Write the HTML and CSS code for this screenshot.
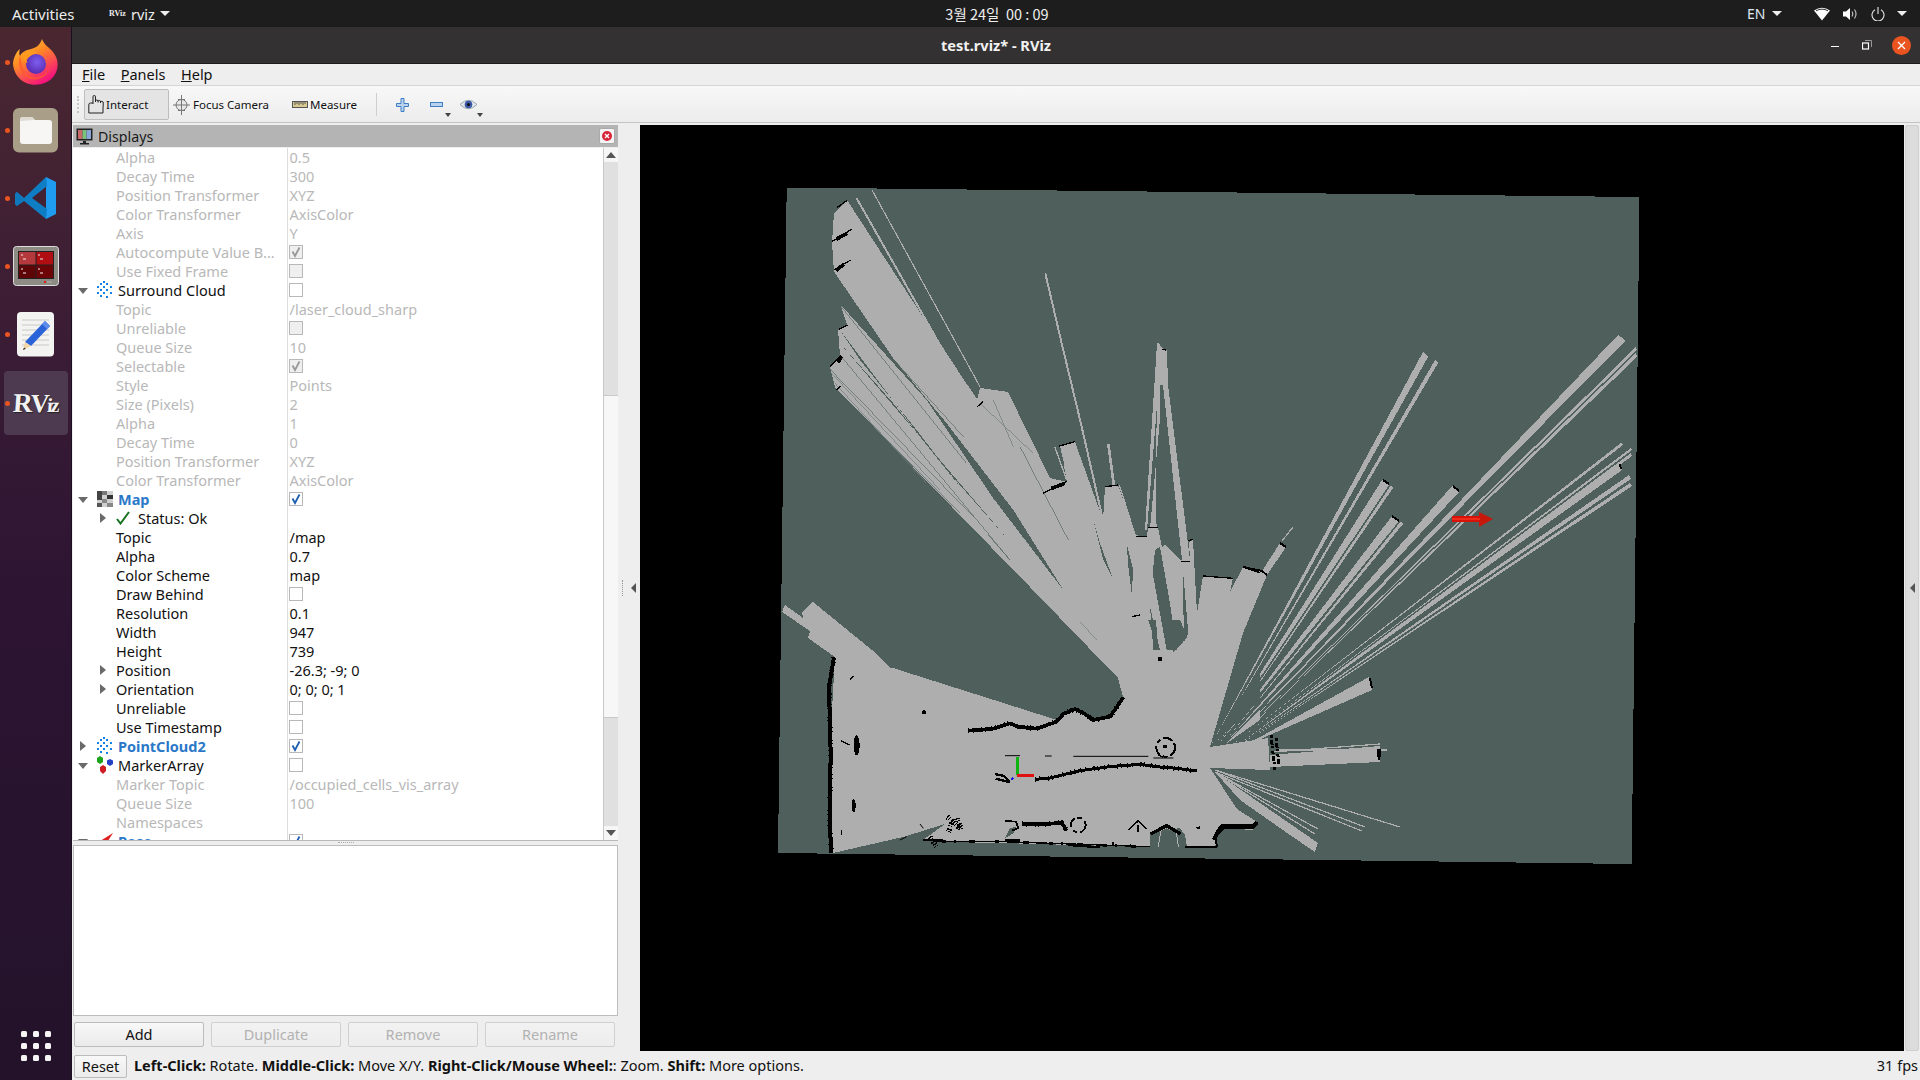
FILE: index.html
```html
<!DOCTYPE html>
<html lang="en">
<head>
<meta charset="utf-8">
<title>test.rviz* - RViz</title>
<link rel="stylesheet" href="styles.css">
</head>
<body>
<svg class="defs" width="0" height="0">
  <defs>
    <symbol id="i-cloud" viewBox="0 0 16 18">
      <g fill="#1183e6"><rect x="6" y="0" width="2" height="2"/><rect x="3" y="2" width="2" height="2"/><rect x="9" y="2" width="2" height="2"/><rect x="0" y="5" width="2" height="2"/><rect x="6" y="5" width="2" height="2"/><rect x="13" y="5" width="2" height="2"/><rect x="3" y="8" width="2" height="2"/><rect x="9" y="8" width="2" height="2"/><rect x="0" y="11" width="2" height="2"/><rect x="13" y="11" width="2" height="2"/><rect x="6" y="11" width="2" height="2"/><rect x="3" y="14" width="2" height="2"/><rect x="9" y="15" width="2" height="2"/></g>
    </symbol>
    <symbol id="i-down" viewBox="0 0 10 6"><path d="M0 0H10L5 6Z" fill="#6a6a6a"/></symbol>
    <symbol id="i-right" viewBox="0 0 6 10"><path d="M0 0V10L6 5Z" fill="#6a6a6a"/></symbol>
    <symbol id="i-check" viewBox="0 0 14 14"><path d="M3.5 6.5 6 11 10.5 2.5" fill="none" stroke="currentColor" stroke-width="1.8"/></symbol>
  </defs>
</svg>
<div class="screen">
  <header class="topbar">
    <div class="top-left">
      <span class="activities">Activities</span>
      <span class="app-mini">RViz</span>
      <span class="app-name">rviz</span>
      <span class="tri"></span>
    </div>
    <div class="clock">3월 24일&nbsp; 00 : 09</div>
    <div class="top-right">
      <span class="lang">EN</span><span class="tri tri-lang"></span>
      <svg class="sys sys-wifi" width="16" height="14" viewBox="0 0 16 14"><path d="M0 3.5Q8-2 16 3.500L8 13.500Z" fill="#fff"/><path d="M2 3.800Q8 0.500 14 3.800" fill="none" stroke="#1d1d1d" stroke-width=".9"/></svg>
      <svg class="sys sys-vol" width="15" height="14" viewBox="0 0 15 14"><path d="M0 4.500H3L7 1V13L3 9.500H0Z" fill="#fff"/><path d="M9 4.500Q10.500 7 9 9.500M11.500 2.500Q14.500 7 11.500 11.500" fill="none" stroke="#bbb" stroke-width="1.200"/></svg>
      <svg class="sys sys-pow" width="14" height="14" viewBox="0 0 14 14"><path d="M4 2.800A6 6 0 1 0 10 2.800M7 0V7" fill="none" stroke="#e8e8e8" stroke-width="1.100"/></svg>
      <span class="tri tri-pow"></span>
    </div>
  </header>

  <div class="below">
    <nav class="dock">
      <div class="dock-item">
        <span class="pip"></span>
        <svg class="d-firefox" width="46" height="46" viewBox="0 0 46 46">
          <defs>
            <linearGradient id="ffa" x1="0" y1="0" x2=".6" y2="1"><stop offset="0" stop-color="#ffd43a"/><stop offset=".45" stop-color="#ff8a24"/><stop offset="1" stop-color="#f5137d"/></linearGradient>
            <radialGradient id="ffb" cx=".55" cy=".4" r=".6"><stop offset="0" stop-color="#7d5ef0"/><stop offset="1" stop-color="#5a2bb0"/></radialGradient>
          </defs>
          <path d="M29 0C31 6 36 8 40 13 46 20 46 30 41 37 35 45 23 48 13 44 4 40 0 31 0 24 1 18 3 13 7 10 6 13 6 15 7 17 9 13 13 11 18 10 23 9 27 6 29 0Z" fill="url(#ffa)"/>
          <circle cx="23" cy="25" r="10" fill="url(#ffb)"/>
          <path d="M10 14C14 11 19 11 24 14 20 14 18 17 16 18 13 19 12 21 15 24 11 23 8 18 10 14Z" fill="#ff9a1f"/>
          <path d="M7 17C9 24 9 32 15 36 23 41 34 37 36 28 36 36 27 42 18 40 9 38 4 26 7 17Z" fill="#ff5a2e" opacity=".75"/>
        </svg>
      </div>
      <div class="dock-item">
        <span class="pip"></span>
        <svg width="46" height="45" viewBox="0 0 46 45">
          <rect width="45" height="44.500" rx="6" fill="#a99e88"/>
          <path d="M7 12Q7 9 10 9H19L22 12H36Q39 12 39 15V33Q39 36 36 36H10Q7 36 7 33Z" fill="#f8f6f4"/>
          <path d="M7 13V12Q7 9 10 9H19L22 12Z" fill="#dfdbd3"/>
        </svg>
      </div>
      <div class="dock-item">
        <span class="pip"></span>
        <svg width="44" height="43" viewBox="0 0 44 43">
          <path d="M32 0 42 5V37L32 42Z" fill="#1f9cf0"/>
          <path d="M32 0 10 21 3 15 1 17 8 22 1 27 3 29 10 24 32 42 33 32 18 21 33 9Z" fill="#0f7dc4"/>
          <path d="M3 15 1 17V27L3 29 8 22Z" fill="#0f78bb"/>
        </svg>
      </div>
      <div class="dock-item">
        <span class="pip"></span>
        <svg width="46" height="40" viewBox="0 0 46 40">
          <rect x=".5" y=".5" width="45" height="39" rx="3" fill="#8e8a84" stroke="#ddd"/>
          <rect x="5" y="5" width="36" height="28" fill="#222"/>
          <rect x="6" y="6" width="16.500" height="12.500" fill="#b5383c"/>
          <rect x="23.500" y="6" width="16.500" height="12.500" fill="#b00e12"/>
          <rect x="6" y="19.500" width="16.500" height="12.500" fill="#5e0508"/>
          <rect x="23.500" y="19.500" width="16.500" height="12.500" fill="#6d0508"/>
          <path d="M8 9h2M8 23h2M25 9h2M25 23h2M10 13h3M10 27h3M27 13h3M27 27h3" stroke="#eee"/>
          <rect x="31" y="35" width="2" height="2" fill="#e11"/>
          <rect x="34" y="35" width="5" height="2" fill="#a09c96"/>
        </svg>
      </div>
      <div class="dock-item">
        <span class="pip"></span>
        <svg width="38" height="45" viewBox="0 0 38 45">
          <rect width="37" height="44.500" rx="4" fill="#f3f3f1"/>
          <path d="M5 8H32M5 13H32M5 18H32M5 23H32M5 28H32M5 33H32" stroke="#c9c9c9"/>
          <path d="M28 9 33 14 14 34 8 30Z" fill="#2a62d8"/>
          <path d="M28 9 33 14 30 17 25 12Z" fill="#5d8cec"/>
          <path d="M8 30 14 34 6 38Z" fill="#f1d6a8"/>
          <path d="M6.500 36.500 8 35.500 8.500 37 6 38Z" fill="#333"/>
        </svg>
      </div>
      <div class="dock-item dock-active">
        <span class="pip pip-active"></span>
        <span class="rviz-logo">R<span class="rviz-v">V</span><span class="rviz-iz">iz</span></span>
      </div>
      <svg class="apps" width="30" height="30" viewBox="0 0 30 30">
        <g fill="#f5f5f5"><rect width="6" height="6" rx="1.500"/><rect x="12" width="6" height="6" rx="1.500"/><rect x="24" width="6" height="6" rx="1.500"/><rect y="12" width="6" height="6" rx="1.500"/><rect x="12" y="12" width="6" height="6" rx="1.500"/><rect x="24" y="12" width="6" height="6" rx="1.500"/><rect y="24" width="6" height="6" rx="1.500"/><rect x="12" y="24" width="6" height="6" rx="1.500"/><rect x="24" y="24" width="6" height="6" rx="1.500"/></g>
      </svg>
    </nav>

    <main class="window">
      <div class="titlebar">
        <span></span>
        <span class="title">test.rviz* - RViz</span>
        <div class="win-controls">
          <span class="w-min"></span>
          <svg class="w-max" width="10" height="10" viewBox="0 0 10 10"><rect x=".5" y="3" width="6" height="6" fill="none" stroke="#fff" stroke-width="1.200"/><path d="M3 .5H9.500V7" fill="none" stroke="#999"/></svg>
          <svg class="w-close" width="19" height="19" viewBox="0 0 19 19"><circle cx="9.500" cy="9.500" r="9.500" fill="#e95420"/><path d="M6 6 13 13M13 6 6 13" stroke="#fff" stroke-width="1.300"/></svg>
        </div>
      </div>
      <div class="menubar">
        <span class="menu"><u>F</u>ile</span>
        <span class="menu"><u>P</u>anels</span>
        <span class="menu"><u>H</u>elp</span>
      </div>
      <div class="toolbar">
        <span class="grip"></span>
        <div class="tool tool-on">
          <svg width="17" height="19" viewBox="0 0 17 19"><path d="M5 9V1.800Q5 .5 6.200 .5 7.500 .5 7.500 1.800V7M7.500 7V5.500Q8.700 4.500 10 5.500V7.500M10 6Q11.200 5 12.500 6V8M12.500 6.500Q14 6 15.200 7V12M5 8H2.500Q.8 8 .8 10V18H15V12" fill="none" stroke="#222" stroke-width="1"/></svg>
          <span>Interact</span>
        </div>
        <div class="tool tool-focus">
          <svg width="17" height="20" viewBox="0 0 17 20"><circle cx="8.500" cy="10" r="5.500" fill="#e8e8e8" stroke="#777"/><path d="M8.500 0V20M0 10H17M5 4.500 12 4.500M5 15.500H12" stroke="#777" fill="none"/></svg>
          <span>Focus Camera</span>
        </div>
        <div class="tool tool-measure">
          <svg width="16" height="8" viewBox="0 0 16 8"><rect x=".5" y=".5" width="15" height="6" fill="#d7c98f" stroke="#555"/><path d="M3 1V4M5 1V3M7 1V4M9 1V3M11 1V4M13 1V3" stroke="#555"/></svg>
          <span>Measure</span>
        </div>
        <span class="tb-sep"></span>
        <svg class="tb-plus" width="13" height="14" viewBox="0 0 13 14"><path d="M5 .5H8V5.500H12.500V8.500H8V13.500H5V8.500H.5V5.500H5Z" fill="#b9d2ee" stroke="#3e7fc4"/></svg>
        <svg class="tb-minus" width="13" height="6" viewBox="0 0 13 6"><rect x=".5" y=".5" width="12" height="4" fill="#b9d2ee" stroke="#3e7fc4"/></svg>
        <svg class="tb-drop" width="6" height="4" viewBox="0 0 6 4"><path d="M0 0H6L3 4Z" fill="#444"/></svg>
        <svg class="tb-eye" width="17" height="13" viewBox="0 0 17 13"><path d="M0 6.500Q8.500-2 17 6.500 8.500 15 0 6.500Z" fill="#e4e6ee" stroke="#9aa"/><circle cx="8.500" cy="6.500" r="3.800" fill="#3c59a8"/><circle cx="8.500" cy="6.500" r="1.600" fill="#111"/></svg>
        <svg class="tb-drop" width="6" height="4" viewBox="0 0 6 4"><path d="M0 0H6L3 4Z" fill="#444"/></svg>
      </div>

      <div class="workspace">
        <section class="left-panel">
          <div class="panel-title">
            <svg width="17" height="17" viewBox="0 0 17 17"><rect x=".5" y=".5" width="16" height="12" fill="#222"/><rect x="2" y="2" width="4.500" height="9" fill="#c96a6a"/><rect x="6.500" y="2" width="4" height="9" fill="#7bc27a"/><rect x="10.500" y="2" width="4.500" height="9" fill="#8aa6d8"/><rect x="7" y="13" width="3" height="2" fill="#222"/><rect x="4" y="15" width="9" height="1.500" fill="#222"/></svg>
            <span class="panel-name">Displays</span>
            <span class="panel-close"><svg width="10" height="10" viewBox="0 0 10 10"><circle cx="5" cy="5" r="5" fill="#d8243a"/><path d="M3 3 7 7M7 3 3 7" stroke="#fff" stroke-width="1.300"/></svg></span>
          </div>
          <div class="tree-frame">
            <div class="tree">
              <div class="row off"><span class="cell-l">Alpha</span><span class="cell-v">0.5</span></div>
              <div class="row off"><span class="cell-l">Decay Time</span><span class="cell-v">300</span></div>
              <div class="row off"><span class="cell-l">Position Transformer</span><span class="cell-v">XYZ</span></div>
              <div class="row off"><span class="cell-l">Color Transformer</span><span class="cell-v">AxisColor</span></div>
              <div class="row off"><span class="cell-l">Axis</span><span class="cell-v">Y</span></div>
              <div class="row off"><span class="cell-l">Autocompute Value B...</span><span class="cell-v"><span class="box box-off"><svg width="14" height="14"><use href="#i-check"/></svg></span></span></div>
              <div class="row off"><span class="cell-l">Use Fixed Frame</span><span class="cell-v"><span class="box box-off"></span></span></div>
              <div class="row"><span class="cell-l top"><svg class="arr-d" width="10" height="6"><use href="#i-down"/></svg><svg class="ico" width="16" height="18"><use href="#i-cloud"/></svg>Surround Cloud</span><span class="cell-v"><span class="box"></span></span></div>
              <div class="row off"><span class="cell-l">Topic</span><span class="cell-v">/laser_cloud_sharp</span></div>
              <div class="row off"><span class="cell-l">Unreliable</span><span class="cell-v"><span class="box box-off"></span></span></div>
              <div class="row off"><span class="cell-l">Queue Size</span><span class="cell-v">10</span></div>
              <div class="row off"><span class="cell-l">Selectable</span><span class="cell-v"><span class="box box-off"><svg width="14" height="14"><use href="#i-check"/></svg></span></span></div>
              <div class="row off"><span class="cell-l">Style</span><span class="cell-v">Points</span></div>
              <div class="row off"><span class="cell-l">Size (Pixels)</span><span class="cell-v">2</span></div>
              <div class="row off"><span class="cell-l">Alpha</span><span class="cell-v">1</span></div>
              <div class="row off"><span class="cell-l">Decay Time</span><span class="cell-v">0</span></div>
              <div class="row off"><span class="cell-l">Position Transformer</span><span class="cell-v">XYZ</span></div>
              <div class="row off"><span class="cell-l">Color Transformer</span><span class="cell-v">AxisColor</span></div>
              <div class="row"><span class="cell-l top blue"><svg class="arr-d" width="10" height="6"><use href="#i-down"/></svg><svg class="ico" width="16" height="18" viewBox="0 0 16 18"><rect y="1" width="16" height="16" fill="#cfcfcf"/><rect width="5" height="9" y="1" fill="#444"/><rect x="5" y="1" width="5" height="4" fill="#777"/><rect x="10" y="5" width="6" height="4" fill="#333"/><rect y="13" width="5" height="4" fill="#555"/><rect x="5" y="9" width="5" height="4" fill="#888"/><rect x="10" y="13" width="6" height="4" fill="#888"/></svg>Map</span><span class="cell-v"><span class="box box-blue"><svg width="14" height="14"><use href="#i-check"/></svg></span></span></div>
              <div class="row"><span class="cell-l status"><svg class="arr-r" width="6" height="10"><use href="#i-right"/></svg><svg class="ok" width="14" height="14" viewBox="0 0 14 14"><path d="M1 8 4.500 12.500 13 1" fill="none" stroke="#17711f" stroke-width="2"/></svg>Status: Ok</span><span class="cell-v"></span></div>
              <div class="row"><span class="cell-l">Topic</span><span class="cell-v">/map</span></div>
              <div class="row"><span class="cell-l">Alpha</span><span class="cell-v">0.7</span></div>
              <div class="row"><span class="cell-l">Color Scheme</span><span class="cell-v">map</span></div>
              <div class="row"><span class="cell-l">Draw Behind</span><span class="cell-v"><span class="box"></span></span></div>
              <div class="row"><span class="cell-l">Resolution</span><span class="cell-v">0.1</span></div>
              <div class="row"><span class="cell-l">Width</span><span class="cell-v">947</span></div>
              <div class="row"><span class="cell-l">Height</span><span class="cell-v">739</span></div>
              <div class="row"><span class="cell-l sub"><svg class="arr-r" width="6" height="10"><use href="#i-right"/></svg>Position</span><span class="cell-v">-26.3; -9; 0</span></div>
              <div class="row"><span class="cell-l sub"><svg class="arr-r" width="6" height="10"><use href="#i-right"/></svg>Orientation</span><span class="cell-v">0; 0; 0; 1</span></div>
              <div class="row"><span class="cell-l">Unreliable</span><span class="cell-v"><span class="box"></span></span></div>
              <div class="row"><span class="cell-l">Use Timestamp</span><span class="cell-v"><span class="box"></span></span></div>
              <div class="row"><span class="cell-l top blue"><svg class="arr-rt" width="6" height="10"><use href="#i-right"/></svg><svg class="ico" width="16" height="18"><use href="#i-cloud"/></svg>PointCloud2</span><span class="cell-v"><span class="box box-blue"><svg width="14" height="14"><use href="#i-check"/></svg></span></span></div>
              <div class="row"><span class="cell-l top"><svg class="arr-d" width="10" height="6"><use href="#i-down"/></svg><svg class="ico" width="16" height="18" viewBox="0 0 16 18"><path d="M3 0 6 2V6L3 8 0 6V2Z" fill="#1ca51c"/><path d="M13 3 16 4.500V8L13 10 10 8V4.500Z" fill="#2440c8"/><path d="M6 9 9 11V15L6 18 3 15V11Z" fill="#d01c24"/></svg>MarkerArray</span><span class="cell-v"><span class="box"></span></span></div>
              <div class="row off"><span class="cell-l">Marker Topic</span><span class="cell-v">/occupied_cells_vis_array</span></div>
              <div class="row off"><span class="cell-l">Queue Size</span><span class="cell-v">100</span></div>
              <div class="row off"><span class="cell-l">Namespaces</span><span class="cell-v"></span></div>
              <div class="row"><span class="cell-l top blue"><svg class="arr-d" width="10" height="6"><use href="#i-down"/></svg><svg class="ico" width="16" height="18" viewBox="0 0 16 18"><path d="M0 11 16 1 9 12Z" fill="#e02020"/></svg>Pose</span><span class="cell-v"><span class="box box-blue"><svg width="14" height="14"><use href="#i-check"/></svg></span></span></div>
            </div>
            <div class="scrollbar">
              <span class="sb-btn"><svg width="10" height="6" viewBox="0 0 10 6"><path d="M0 6H10L5 0Z" fill="#555"/></svg></span>
              <span class="sb-track sb-upper"></span>
              <span class="sb-thumb"></span>
              <span class="sb-track sb-lower"></span>
              <span class="sb-btn"><svg width="10" height="6" viewBox="0 0 10 6"><path d="M0 0H10L5 6Z" fill="#555"/></svg></span>
            </div>
          </div>
          <div class="hsplit"><span class="hdots"></span></div>
          <div class="desc"></div>
          <div class="btn-row">
            <span class="btn">Add</span>
            <span class="btn btn-off">Duplicate</span>
            <span class="btn btn-off">Remove</span>
            <span class="btn btn-off">Rename</span>
          </div>
        </section>
        <div class="vsplit">
          <span class="vdots"></span>
          <svg width="5" height="10" viewBox="0 0 5 10"><path d="M5 0V10L0 5Z" fill="#555"/></svg>
        </div>
        <div class="view">
          <svg class="map" width="1264" height="926" viewBox="640 125 1264 926" shape-rendering="crispEdges">
            <polygon class="unk" points="786.700,187.500 1639.500,197 1631.700,864 778,853"/>
            <polygon class="free" points="835,387 830,367 840,355 838,330 847,325 840,303 834,272 832,242 834,213 847,200 977,400 980,388 1008,392 1050,478 1067,482 1060,445 1075,442 1103,520 1105,487 1118,485 1135,535 1147,537 1148,527 1158,527 1162,547 1165,545 1181,560 1190,560 1189,542 1193,540 1197,613 1203,576 1233,578 1230,592 1243,567 1262,571 1267,575 1243,633 1210,747 1210,768 1237,809 1257,822 1253,830 1220,828 1215,847 1187,847 1185,835 1180,828 1150,833 1150,847 1000,843 940,842 923,840 945,824 903,837 833,853 828,780 835,657 808,638 810,631 782,612 785,605 803,618 802,612 813,602 872,650 890,668 893,668 1057,720 1077,708 1093,720 1113,713 1123,697 1118,678 1030,587"/>
            <polygon class="free" points="1157,528 1156,520 1157,343 1165,350 1167,350 1168,385 1190,560 1182,560 1162,397 1150,528"/>
            <polygon class="unk" points="1160,385 1163,385 1182,560 1168,545 1161,500"/>
            <polygon class="free" points="1157,343 1160,344 1159,380 1147,530 1145,530 1155,375"/>
            <g transform="translate(760,170) scale(.33333)">
              <polygon class="unk" points="222,305 238,400 500,690 700,985 910,1260 760,1020 560,760 400,565"/>
              <polygon class="unk" points="236,515 300,590 480,800 745,1110 560,900 400,700"/>
              <polygon class="unk" points="240,480 480,800 600,950 470,780 300,570"/>
              <polygon class="unk" points="900,830 912,880 916,930 898,880"/>
              <polygon class="unk" points="1000,1050 1020,1120 1060,1230 1030,1170"/>
              <polygon class="unk" points="1100,1120 1120,1200 1115,1270 1105,1190"/>
              <polygon class="unk" points="1185,1140 1200,1130 1230,1300 1250,1440 1220,1440 1178,1210"/>
              <polygon class="unk" points="1170,1310 1200,1440 1180,1440"/>
              <polygon class="unk" points="1268,1190 1285,1390 1272,1415"/>
              <path class="fine" d="M225,655 600,1030M212,600 640,1040M240,555 750,1170M685,1095 750,1170M780,830 925,1110M240,405 620,880M285,440 610,800"/>
              <path class="fine-t" d="M225,640 500,940M215,610 540,960M660,700 820,850M700,690 760,830M960,1355 1010,1410"/>
              <path class="thin" stroke-width="3.500" d="M336,60 660,650"/>
              <path class="thin" stroke-width="6" d="M290,85 560,560 650,690"/>
              <path class="thin" stroke-width="6" d="M856,310 905,520 965,770 1030,1055"/>
              <path class="thin" stroke-width="8" d="M1045,822 1062,948"/>
              <path class="thin" stroke-width="4" d="M885,832 920,930"/>
              <path class="thin" stroke-width="4" d="M1078,945 1125,1095"/>
              <path class="wall" stroke-width="4" d="M232,112 260,92M215,215 275,178M222,300 272,270M238,478 262,465M210,590 243,555M228,660 243,648M650,712 668,695M850,970 920,935M898,828 945,815M1035,950 1075,945M1128,1100 1160,1100M1165,1072 1195,1072M1205,538 1218,540M1262,1174 1290,1174M1330,1218 1420,1225M1450,1192 1500,1208M1115,1340 1140,1335M1285,1112 1298,1108"/>
              <path class="wall" stroke-width="11" d="M228,302 252,282M228,208 262,190M875,955 915,940M235,578 244,558"/>
            </g>
            <g class="free">
              <polygon points="1210,747 1423,352 1428,357"/>
              <polygon points="1212,747 1435,360 1438,363"/>
              <polygon points="1215,745 1382,480 1389,485"/>
              <polygon points="1217,745 1391,485 1393,488"/>
              <polygon points="1218,745 1392,516 1399,521"/>
              <polygon points="1222,745 1401,521 1403,524"/>
              <polygon points="1224,745 1452,486 1459,492"/>
              <polygon points="1228,745 1618,335 1624,339"/>
              <polygon points="1226,745 1623,339 1625,341"/>
              <polygon points="1230,745 1636,347 1637,350"/>
              <polygon points="1232,745 1636,353 1637,357"/>
              <polygon points="1232,745 1621,443 1623,445"/>
              <polygon points="1236,745 1631,448 1632,450"/>
              <polygon points="1238,745 1631,453 1632,456"/>
              <polygon points="1238,745 1620,463 1622,470"/>
              <polygon points="1240,745 1629,475 1631,479"/>
              <polygon points="1242,745 1630,483 1632,486"/>
              <polygon points="1240,748 1369,677 1372,690"/>
              <polygon points="1280,543 1286,547 1267,575 1262,571"/>
              <polygon points="1210,747 1268,738 1270,770 1210,768"/>
              <polygon points="1270,755 1380,746 1380,762 1270,767"/>
              <polygon points="1215,772 1318,843 1315,852 1290,835 1240,800"/>
            </g>
            <path class="thin-s" d="M1282,541 1293,527M1272,752 1380,744M1278,750 1387,750M1215,770 1400,827M1215,770 1365,827M1215,772 1362,831M1215,772 1318,829M1215,772 1315,834"/>
            <path class="wall" stroke-width="2" d="M1280,543 1286,547M1243,567 1262,571M1262,571 1267,575M1383,480 1389,484M1392,516 1399,521M1453,486 1459,491M1370,678 1372,688M1379,755 1379,760M1620,464 1621,469"/>
            <g transform="translate(760,620) scale(.33333)">
              <polygon class="unk" points="1185,680 1190,640 1220,625 1255,640 1272,680"/>
              <polygon class="unk" points="735,655 750,625 768,620 760,640"/>
              <polygon class="unk" points="1165,0 1195,95 1188,0"/>
              <polygon class="unk" points="1260,0 1282,50 1270,65 1240,98 1212,0"/>
              <polygon class="unk" points="1350,380 1500,140 1500,240"/>
              <polygon class="free" points="1400,370 1500,270 1500,300"/>
              <path class="thin" stroke-width="3" d="M1195,680 1203,628M1255,680 1248,630"/>
              <path class="wall" stroke-width="11" d="M625,332 700,326 750,310 775,320 830,326 890,305 910,282 945,267 975,282 1000,300 1050,290 1070,262 1090,232"/>
              <path class="rough" d="M625,332 700,326 750,310 775,320 830,326 890,305 910,282 945,267 975,282 1000,300 1050,290 1070,262 1090,232"/>
              <path class="wall" stroke-width="12" d="M222,112 207,200 212,400 209,600 214,698"/>
              <path class="rough" d="M222,112 207,200 212,400 209,600 214,698"/>
              <path class="wall" stroke-width="3" d="M735,407H780M855,408H875M940,409H1165M1180,414H1240"/>
              <path class="wall" stroke-width="9" d="M825,478 870,474 960,452 1050,440 1140,433 1200,441 1250,445 1310,453"/>
              <path class="rough" d="M825,478 870,474 960,452 1050,440 1140,433 1200,441 1250,445 1310,453"/>
              <path class="wall" stroke-width="7" d="M705,462 732,468 748,486 707,476"/>
              <ellipse class="blob" cx="290" cy="376" rx="9" ry="30"/>
              <ellipse class="blob" cx="281" cy="557" rx="6" ry="20"/>
              <circle class="blob" cx="492" cy="277" r="6"/>
              <circle class="blob" cx="1215" cy="380" r="6"/>
              <circle class="ring" cx="1217" cy="382" r="28"/>
              <circle class="blob" cx="1200" cy="118" r="7"/>
              <path class="wall" stroke-width="4" d="M243,362 270,375M1195,405 1210,412M245,630V645M270,178 280,168"/>
              <path class="wall" stroke-width="5" d="M735,602 768,605 775,625 755,632"/>
              <path class="wall" stroke-width="11" d="M785,612 850,613 905,608 920,632"/>
              <path class="rough" d="M785,612 850,613 905,608 920,632"/>
              <circle class="ring" cx="955" cy="615" r="22"/>
              <path class="wall" stroke-width="5" d="M1105,630 1135,602 1160,628M1135,615V635"/>
              <path class="wall" stroke-width="10" d="M1172,642 1220,617 1262,642"/>
              <path class="wall" stroke-width="6" d="M1275,680 1370,680 1368,650 1392,625 1478,625 1490,612"/>
              <path class="wall" stroke-width="4" d="M545,665 725,665 1170,680"/>
              <path class="rough-s" d="M545,665 725,665 1170,680"/>
              <path class="wall" stroke-width="7" d="M925,675 1020,682M1060,665 1060,675M735,662H780M490,660 550,662M1310,625 1320,622"/>
              <path class="rough-b" d="M562,590 600,625M575,610 565,635M590,595 605,630M510,650 530,680"/>
              <path class="wall" stroke-width="3" d="M480,612 490,625M420,660 440,650"/>
              <rect x="768" y="410" width="8" height="56" fill="#0fb30f"/>
              <rect x="772" y="463" width="51" height="9" fill="#e01010"/>
              <circle cx="757" cy="476" r="4" fill="#1a1ae0"/>
            </g>
            <path class="rough-c" d="M1271,735 1275,770M1276,738 1279,765"/>
            <rect class="blob" x="1377" y="749" width="4" height="8"/>
            <path class="wall" stroke-width="4" d="M1217,833 1222,826H1254L1257,822M1217,833 1214,840"/>
            <g shape-rendering="auto">
              <rect x="1452" y="516" width="29" height="6" fill="#d81208"/>
              <path d="M1479 512 1493 519 1479 527Z" fill="#c8180c"/>
              <path d="M1452 519H1480" stroke="#ee2a18" stroke-width="2"/>
            </g>
          </svg>
        </div>
        <div class="right-dock"><svg width="5" height="10" viewBox="0 0 5 10"><path d="M5 0V10L0 5Z" fill="#555"/></svg></div>
      </div>
      <footer class="statusbar">
        <span class="btn btn-reset">Reset</span>
        <span class="hint"><b>Left-Click:</b> Rotate. <b>Middle-Click:</b> Move X/Y. <b>Right-Click/Mouse Wheel:</b>: Zoom. <b>Shift:</b> More options.</span>
        <span class="fps">31 fps</span>
      </footer>
    </main>
  </div>
</div>
</body>
</html>
```

FILE: styles.css
```css
* { box-sizing: border-box; }
html, body { margin: 0; height: 100%; }
body { font-family: "Noto Sans", Lato, sans-serif; font-size: 14.5px; color: #111; overflow: hidden; background: #000; }
.defs { position: absolute; }
.screen { width: 1920px; height: 1080px; display: flex; flex-direction: column; }

/* top bar */
.topbar { height: 27px; flex: none; background: #1d1d1d; color: #eee; display: grid; grid-template-columns: 900px 194px 1fr; align-items: center; font-size: 15px; }
.top-left { display: flex; align-items: center; padding-left: 12px; }
.activities { width: 97px; }
.app-mini { width: 22px; font: bold 8px "Liberation Serif", serif; }
.app-name { width: 29px; font-size: 14.5px; }
.tri { width: 0; height: 0; border-left: 5px solid transparent; border-right: 5px solid transparent; border-top: 5px solid #eee; }
.clock { text-align: center; font-family: "Noto Sans CJK KR", "Noto Sans", sans-serif; font-size: 14.5px; white-space: nowrap; }
.top-right { display: flex; align-items: center; padding-left: 653px; }
.lang { width: 25px; color: #dfe8f2; font-size: 14px; }
.tri-lang { margin-right: 32px; }
.sys { flex: none; }
.sys-wifi { margin-right: 13px; }
.sys-vol { margin-right: 13px; }
.sys-pow { margin-right: 12px; }

.below { flex: 1; display: flex; min-height: 0; }

/* dock */
.dock { width: 72px; flex: none; background: linear-gradient(180deg, #4a2730 0%, #3a1c35 30%, #2c1432 55%, #23122a 100%); display: flex; flex-direction: column; align-items: center; position: relative; padding-top: 1px; border-right: 1px solid #1a0f1f; }
.dock-item { width: 64px; height: 68px; flex: none; display: flex; align-items: center; justify-content: center; position: relative; }
.pip { position: absolute; left: 1px; top: 32px; width: 5px; height: 5px; border-radius: 50%; background: #e95420; }
.dock-active { background: #4e3a50; border-radius: 4px; height: 64px; margin-top: 3px; }
.pip-active { top: 30px; }
.rviz-logo { font: bold 27px "Liberation Serif", serif; color: #f2f2f2; letter-spacing: -2px; transform: skewX(-4deg); line-height: 1; text-shadow: 1px 1px 1px #222; }
.rviz-v { font-size: 26px; }
.rviz-iz { font-size: 20px; }
.apps { position: absolute; left: 21px; bottom: 19px; }

/* window */
.window { flex: 1; min-width: 0; display: flex; flex-direction: column; background: #eee; }
.titlebar { height: 37px; flex: none; background: #333132; color: #f2f2f2; display: grid; grid-template-columns: 1fr auto 1fr; align-items: center; border-bottom: 1px solid #1d1d1d; }
.title { font-weight: 700; font-size: 14.6px; }
.win-controls { display: flex; align-items: center; justify-content: flex-end; padding-right: 9px; }
.w-min { width: 8px; height: 1px; background: #fff; margin-right: 23px; margin-top: 3px; }
.w-max { margin-right: 20px; }
.menubar { height: 22px; flex: none; display: flex; align-items: center; padding-left: 10px; padding-bottom: 2px; gap: 15.5px; border-bottom: 1px solid #d4d4d4; background: #eee; }
.menu { color: #111; }
.toolbar { height: 37px; flex: none; display: flex; align-items: center; background: linear-gradient(180deg, #f8f8f8, #ececec); border-bottom: 1px solid #c4c4c4; padding-left: 5px; padding-top: 1px; font-size: 11.5px; position: relative; }
.grip { width: 1px; height: 17px; border-left: 2px dotted #c4c4c4; margin-right: 5px; }
.tool { display: flex; align-items: center; height: 31px; }
.tool-on { width: 85px; padding-left: 3px; gap: 1px; background: #e4e4e4; border: 1px solid #bdbdbd; border-radius: 2px; margin-right: 4px; }
.tool-focus { width: 119px; gap: 3px; }
.tool-measure { width: 84px; gap: 2px; }
.tb-sep { width: 1px; height: 23px; background: #cfcfcf; margin-right: 19px; }
.tb-plus { margin-right: 21px; }
.tb-minus { margin-right: 2px; }
.tb-drop { margin: 21px 0 0 0; }
.tb-minus + .tb-drop { margin-right: 9px; }

.workspace { flex: 1; display: flex; min-height: 0; padding-top: 2px; }
.left-panel { width: 545px; flex: none; display: flex; flex-direction: column; margin-left: 1px; }
.panel-title { height: 22px; flex: none; background: #b4b4b4; display: flex; align-items: center; padding-left: 3px; position: relative; }
.panel-name { margin-left: 5px; font-size: 14.2px; color: #1a1a1a; }
.panel-close { position: absolute; right: 3px; top: 3px; width: 16px; height: 16px; background: #f4f4f4; border: 1px solid #aaa; border-radius: 2px; display: flex; align-items: center; justify-content: center; }
.tree-frame { height: 693px; flex: none; display: flex; background: #fff; border-bottom: 1px solid #b9b9b9; margin-top: 1px; }
.tree { flex: 1; overflow: hidden; }
.row { height: 19px; display: grid; grid-template-columns: 213.5px 1fr; line-height: 19px; white-space: nowrap; }
.off { color: #b8b8b8; }
.cell-l { padding-left: 43px; display: flex; align-items: center; position: relative; }
.cell-v { padding-left: 2px; border-left: 1px solid #dcdcdc; display: flex; align-items: center; }
.top { padding-left: 45px; }
.blue { color: #2b78c8; font-weight: 700; }
.status { padding-left: 65px; }
.arr-d { position: absolute; left: 5px; top: 7px; }
.arr-rt { position: absolute; left: 7px; top: 4px; }
.arr-r { position: absolute; left: 27px; top: 4px; }
.ico { position: absolute; left: 24px; top: 0; }
.ok { position: absolute; left: 43px; top: 2px; }
.box { width: 14px; height: 14px; margin: -1px 0 0 -1px; border: 1px solid #b8b8b8; background: #fff; display: block; color: #1f5fb0; }
.box svg { display: block; margin: -1px; }
.box-off { background: #efefef; color: #999; }
.scrollbar { width: 15px; flex: none; display: flex; flex-direction: column; border-left: 1px solid #c9c9c9; }
.sb-btn { height: 14px; flex: none; display: flex; align-items: center; justify-content: center; background: #f6f6f6; }
.sb-track { background: #e0e0e0; display: block; }
.sb-upper { height: 233px; }
.sb-thumb { height: 323px; background: #f7f7f7; border-top: 1px solid #c9c9c9; border-bottom: 1px solid #c9c9c9; display: block; }
.sb-lower { flex: 1; }
.hsplit { height: 4px; flex: none; position: relative; }
.hdots { position: absolute; left: 265px; top: 1px; width: 16px; border-top: 1px dotted #aaa; }
.desc { height: 171px; flex: none; background: #fff; border: 1px solid #bdbdbd; }
.btn-row { flex: 1; display: flex; gap: 7px; padding: 6px 2px 0 1px; }
.btn { height: 25px; width: 130px; padding-bottom: 2px; display: flex; align-items: center; justify-content: center; background: linear-gradient(180deg, #f8f8f8, #ebebeb); border: 1px solid #bcbcbc; border-radius: 2px; color: #111; }
.btn-off { color: #b2b2b2; background: linear-gradient(180deg, #f2f2f2, #ededed); border-color: #d0d0d0; }
.vsplit { width: 22px; flex: none; display: flex; align-items: center; gap: 8px; padding-left: 4px; }
.vdots { height: 16px; border-left: 1px dotted #999; }
.view { width: 1264px; flex: none; background: #000; height: 926px; }
.map { display: block; }
.unk { fill: #4e5f5c; }
.free { fill: #aeaeae; }
.fine { fill: none; stroke: #4e5f5c; stroke-width: 1.800; }
.fine-t { fill: none; stroke: #6d7b79; stroke-width: 2; }
.thin { fill: none; stroke: #aeaeae; }
.thin-s { fill: none; stroke: #aeaeae; stroke-width: 1.200; }
.wall { fill: none; stroke: #000; stroke-linejoin: round; }
.rough { fill: none; stroke: #000; stroke-width: 15; stroke-dasharray: 3 11 2 23 4 7 3 17; }
.rough-s { fill: none; stroke: #000; stroke-width: 9; stroke-dasharray: 12 25 6 40 18 60; }
.rough-b { fill: none; stroke: #000; stroke-width: 16; stroke-dasharray: 4 4 2 7 5 3; }
.rough-c { fill: none; stroke: #000; stroke-width: 3; stroke-dasharray: 3 2 5 1 2 3; }
.blob { fill: #000; }
.ring { fill: none; stroke: #000; stroke-width: 6; stroke-dasharray: 30 8 14 10; }
.right-dock { flex: 1; margin: 0 1px 0 1px; background: #dcdcdc; border: 1px solid #cfcfcf; border-radius: 2px; display: flex; align-items: center; justify-content: center; height: 926px; }
.statusbar { height: 29px; flex: none; display: flex; align-items: center; padding: 0 2px 2px; background: #eee; }
.btn-reset { width: 53px; height: 23px; flex: none; margin-top: 4px; }
.hint { margin-left: 7px; color: #111; }
.hint b { font-weight: 700; }
.fps { margin-left: auto; }
```
